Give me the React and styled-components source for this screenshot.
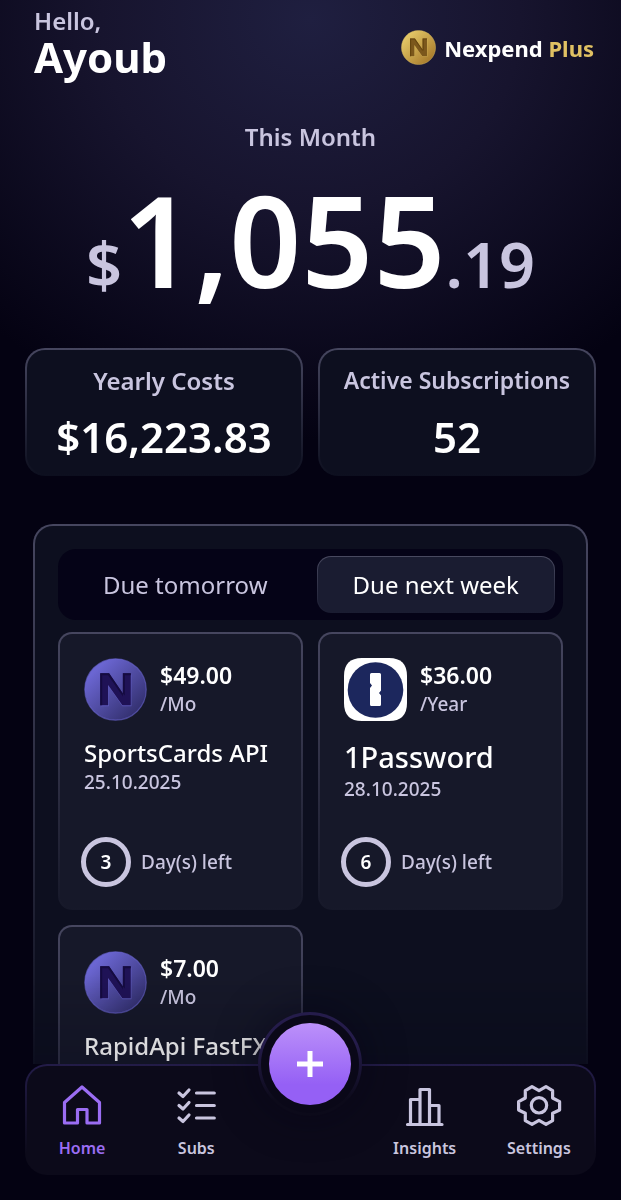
import React, { useState } from 'react'
import styled, { createGlobalStyle, css } from 'styled-components'

const subscriptions = [
  { logo: `nexpend`, price: `$49.00`, period: `/Mo`, name: `SportsCards API`, date: `25.10.2025`, days: 3 },
  { logo: `onepassword`, price: `$36.00`, period: `/Year`, name: `1Password`, date: `28.10.2025`, days: 6, large: true },
  { logo: `nexpend`, price: `$7.00`, period: `/Mo`, name: `RapidApi FastFX` },
]

const Coin = ({ id, size, light, dark, letter, shade }) => {
  return (
    <svg width={size} height={size} viewBox="0 0 64 64" aria-hidden="true">
      <defs>
        <linearGradient id={id} x1="0.1" y1="0.1" x2="0.9" y2="0.9">
          <stop offset="0.1" stopColor={light}/>
          <stop offset="1" stopColor={dark}/>
        </linearGradient>
      </defs>
      <circle cx="32" cy="32" r="31.2" fill={`url(#${id})`} stroke={light} strokeWidth="1.2" strokeOpacity="0.6"/>
      <path d="M17.2 49V16.5h8.5L40 37V16.5h8.2V49H39L25.2 29v20z" fill={light} opacity="0.6"/>
      <path d="M16.5 48V15.5h9L39.5 36V15.5h8V48H39L24.5 27.5V48z" fill={letter}/>
      <path d="M16.5 15.5h9L39.5 36v3L24.5 17.5h-6V48h-2zM39.5 15.5h8v2h-6V38l-2-2z" fill={shade}/>
    </svg>
  )
}

const OnePassword = () => {
  return (
    <svg width="63" height="63" viewBox="0 0 63 63" aria-hidden="true">
      <path d="M18 0h27q18 0 18 18v27q0 18-18 18H18Q0 63 0 45V18Q0 0 18 0z" fill="#fff"/>
      <circle cx="31.5" cy="32" r="27.8" fill="#1c275d"/>
      <path d="M27.5 15h8q1.500 0 1.500 1.500V32.500l-2 2.500 2 2.500v9q0 1.500-1.500 1.500h-8q-1.500 0-1.500-1.500V30l2-2.500-2-2.500v-8.500q0-1.500 1.500-1.500z" fill="#fff"/>
    </svg>
  )
}

const HomeIcon = () => {
  return (
    <NavSvg viewBox="0 0 48 48">
      <path d="M6.5 42V21.5L24 6l17.5 15.5V42H29V28.5h-9.5V42z"/>
    </NavSvg>
  )
}

const SubsIcon = () => {
  return (
    <NavSvg viewBox="0 0 48 48">
      <path d="M7 12l4 3.5 6-6.500M7 24.500l4 3.500 6-6.500M7 37l4 3.500 6-6.500M24.500 12h17.800M24.500 24.500h17.800M24.500 37h17.800"/>
    </NavSvg>
  )
}

const InsightsIcon = () => {
  return (
    <NavSvg viewBox="0 0 48 48">
      <path d="M6.500 43.500H41M9.500 43.500V18.500H19M19 43.500V8.500h9.500v35M28.500 24.500H38v19"/>
    </NavSvg>
  )
}

const SettingsIcon = () => {
  return (
    <NavSvg viewBox="0 0 48 48">
      <path d="M24 9.700l7-4 6.600 4V17l7 3.700V29l-7 3.300v7.400L31 43.300l-7-4-7 4-6.700-3.600v-7.400L3.600 29v-8.300l6.700-3.700V9.700l6.700-4z"/>
      <circle cx="24" cy="24.300" r="7.700"/>
    </NavSvg>
  )
}

const SubscriptionCard = ({ item, id }) => {
  return (
    <Card>
      <CardBody>
        <PriceRow>
          {item.logo === `onepassword`
            ? <OnePassword/>
            : <Coin id={id} size={63} light="#6b66d2" dark="#302d6a" letter="#1f1256" shade="#150b40"/>}
          <div>
            <Price>{item.price}</Price>
            <Period>{item.period}</Period>
          </div>
        </PriceRow>
        <Name large={item.large}>{item.name}</Name>
        {item.date && <DueDate>{item.date}</DueDate>}
      </CardBody>
      {
        item.days &&
        <DaysRow>
          <DaysRing>{item.days}</DaysRing>
          Day(s) left
        </DaysRow>
      }
    </Card>
  )
}

const App = () => {
  const [tab, setTab] = useState(`week`)
  return (
    <Screen>
      <GlobalStyle/>
      <Content>
        <Header>
          <div>
            <Greeting>Hello,</Greeting>
            <UserName>Ayoub</UserName>
          </div>
          <Brand>
            <Coin id="gold" size={35} light="#e2c565" dark="#a5782a" letter="#7b571c" shade="#65450f"/>
            <span>Nexpend <Plus>Plus</Plus></span>
          </Brand>
        </Header>
        <Month>This Month</Month>
        <Amount><Small>$</Small>1,055<Small>.19</Small></Amount>
        <Stats>
          <Stat>
            <StatLabel>Yearly Costs</StatLabel>
            <StatValue>$16,223.83</StatValue>
          </Stat>
          <Stat>
            <StatLabel compact>Active Subscriptions</StatLabel>
            <StatValue>52</StatValue>
          </Stat>
        </Stats>
        <Panel>
          <Tabs>
            <Tab active={tab === `tomorrow`} onClick={() => setTab(`tomorrow`)}>Due tomorrow</Tab>
            <Tab active={tab === `week`} onClick={() => setTab(`week`)}>Due next week</Tab>
          </Tabs>
          <Cards>
            {subscriptions.map((item,index) => {
              return <SubscriptionCard key={index} item={item} id={`coin${index}`}/>
            })}
          </Cards>
        </Panel>
      </Content>
      <Nav>
        <NavItems>
          <NavLink href="#home" active><HomeIcon/>Home</NavLink>
          <NavLink href="#subs"><SubsIcon/>Subs</NavLink>
          <AddSlot>
            <AddRing>
              <AddButton aria-label="Add subscription">
                <svg width="28" height="28" viewBox="0 0 28 28" stroke="#fff" strokeWidth="5"><path d="M14 1v26M1 14h26"/></svg>
              </AddButton>
            </AddRing>
          </AddSlot>
          <NavLink href="#insights"><InsightsIcon/>Insights</NavLink>
          <NavLink href="#settings"><SettingsIcon/>Settings</NavLink>
        </NavItems>
      </Nav>
    </Screen>
  )
}

export default App

const GlobalStyle = createGlobalStyle`
  *{
    box-sizing: border-box;
  }
  body{
    margin: 0;
    background: #040212;
    font-family: "Noto Sans", sans-serif;
    color: white;
  }
  svg{
    display: block;
    flex-shrink: 0;
  }
`
const gradientBorder = css`
  border: 2px solid transparent;
  background: linear-gradient(${p => p.fill}, ${p => p.fill}) padding-box, linear-gradient(#46465f, ${p => p.fill} ${p => p.stop || `100%`}) border-box;
`
const Screen = styled.main`
  display: flex;
  flex-direction: column;
  height: 100vh;
  overflow: hidden;
  background: radial-gradient(ellipse 75% 420px at 50% 20px, #1f1f40 0%, #17142e 45%, #040212 100%);
`
const Content = styled.div`
  flex: 1;
  min-height: 0;
  overflow-y: auto;
  scrollbar-width: none;
  mask-image: linear-gradient(black calc(100% - 90px), #000000d0);
`
const Header = styled.header`
  display: flex;
  justify-content: space-between;
  align-items: center;
  padding: 8px 27px 0 34px;
`
const Greeting = styled.div`
  font-size: 24px;
  line-height: 26px;
  font-weight: 600;
  color: #c9c5df;
`
const UserName = styled.div`
  font-size: 42px;
  line-height: 46px;
  font-weight: 700;
`
const Brand = styled.div`
  display: flex;
  align-items: center;
  gap: 8px;
  margin-top: 7px;
  font-size: 22px;
  line-height: 30px;
  font-weight: 700;
`
const Plus = styled.span`
  color: #e0c163;
`
const Month = styled.h2`
  margin: 42px 0 17px;
  text-align: center;
  font-size: 24px;
  line-height: 30px;
  font-weight: 600;
  color: #c9c5df;
`
const Amount = styled.div`
  display: flex;
  align-items: baseline;
  justify-content: center;
  height: 140px;
  font-size: 126px;
  line-height: 140px;
  font-weight: 600;
`
const Small = styled.span`
  font-size: 63px;
  color: #c9c5df;
`
const Stats = styled.section`
  display: grid;
  grid-template-columns: 1fr 1fr;
  gap: 15px;
  padding: 0 25px;
  margin-top: 39px;
`
const Stat = styled.div.attrs({ fill: `#0d0f1f` })`
  ${gradientBorder}
  display: flex;
  flex-direction: column;
  align-items: center;
  justify-content: space-between;
  height: 128px;
  padding: 16px 0 9px;
  border-radius: 20px;
`
const StatLabel = styled.div.withConfig({ shouldForwardProp: p => p !== `compact` })`
  font-size: ${p => p.compact ? `23px` : `24px`};
  line-height: ${p => p.compact ? `28px` : `30px`};
  font-weight: 600;
  color: #c9c5df;
`
const StatValue = styled.div`
  font-size: 42px;
  line-height: 56px;
  font-weight: 600;
`
const Panel = styled.section.attrs({ fill: `#0d0f1f`, stop: `560px` })`
  ${gradientBorder}
  margin: 48px 33px 0;
  padding: 23px;
  border-radius: 20px;
`
const Tabs = styled.div`
  display: grid;
  grid-template-columns: 1fr 1fr;
  gap: 12px;
  padding: 7px 8px;
  border-radius: 18px;
  background: #050317;
`
const Tab = styled.button.withConfig({ shouldForwardProp: p => p !== `active` }).attrs({ type: `button` })`
  height: 57px;
  padding: 0;
  border: 1px solid transparent;
  border-radius: 14px;
  background: ${p => p.active ? `linear-gradient(#1a1c31, #1a1c31) padding-box, linear-gradient(#494a60, #1a1c31) border-box` : `none`};
  font-family: inherit;
  font-size: 24px;
  line-height: 30px;
  color: ${p => p.active ? `white` : `#c9c5df`};
  cursor: pointer;
`
const Cards = styled.div`
  display: grid;
  grid-template-columns: 1fr 1fr;
  gap: 15px;
  margin-top: 12px;
`
const Card = styled.article.attrs({ fill: `#161829` })`
  ${gradientBorder}
  display: flex;
  flex-direction: column;
  justify-content: space-between;
  height: 278px;
  padding: 24px 21px 21px;
  border-radius: 14px;
  overflow: hidden;
`
const CardBody = styled.div`
  padding: 0 3px;
`
const PriceRow = styled.div`
  display: flex;
  align-items: flex-start;
  gap: 13px;
  height: 64px;
  margin-bottom: 14px;
`
const Price = styled.div`
  font-size: 23px;
  line-height: 34px;
  font-weight: 600;
`
const Period = styled.div`
  font-size: 19px;
  line-height: 24px;
  font-weight: 500;
  color: #c9c5df;
`
const Name = styled.h3.withConfig({ shouldForwardProp: p => p !== `large` })`
  margin: 0;
  font-size: ${p => p.large ? `29px` : `24px`};
  line-height: ${p => p.large ? `41px` : `34px`};
  font-weight: 500;
  white-space: nowrap;
`
const DueDate = styled.div`
  font-size: 19px;
  line-height: 24px;
  font-weight: 500;
  color: #c9c5df;
`
const DaysRow = styled.div`
  display: flex;
  align-items: center;
  gap: 10px;
  font-size: 19px;
  line-height: 26px;
  font-weight: 500;
  color: #c9c5df;
`
const DaysRing = styled.div`
  display: flex;
  align-items: center;
  justify-content: center;
  width: 50px;
  height: 50px;
  border: 5px solid #c9c5df;
  border-radius: 50%;
  font-size: 19px;
  font-weight: 600;
  color: white;
`
const Nav = styled.nav`
  position: relative;
  height: 111px;
  margin: 0 25px 25px;
  border: 2px solid transparent;
  border-radius: 22px;
  background: linear-gradient(#0c0a1a, #0c0a1a) padding-box, linear-gradient(#231c48, #0c0a1a 80%) border-box;
`
const NavItems = styled.div`
  display: grid;
  grid-template-columns: repeat(5, 1fr);
  margin: 0 -2px;
`
const NavLink = styled.a.withConfig({ shouldForwardProp: p => p !== `active` })`
  display: flex;
  flex-direction: column;
  align-items: center;
  gap: 7px;
  padding-top: 15px;
  font-size: 16px;
  line-height: 24px;
  font-weight: 600;
  text-decoration: none;
  color: ${p => p.active ? `#9b6df3` : `#c9c5df`};
`
const NavSvg = styled.svg.attrs({ 'aria-hidden': true })`
  width: 48px;
  height: 48px;
  fill: none;
  stroke: currentColor;
  stroke-width: 3.2;
  stroke-linecap: round;
  stroke-linejoin: round;
`
const AddSlot = styled.div`
  display: flex;
  justify-content: center;
`
const AddRing = styled.div`
  display: flex;
  align-items: center;
  justify-content: center;
  width: 104px;
  height: 104px;
  margin-top: -54px;
  flex-shrink: 0;
  border: 3px solid transparent;
  border-radius: 50%;
  background: linear-gradient(#0a0818, #0a0818) padding-box, linear-gradient(#251c4b 30%, #0c0a1a 85%) border-box;
  box-shadow: 0 0 40px #05031680;
`
const AddButton = styled.button.attrs({ type: `button` })`
  display: flex;
  align-items: center;
  justify-content: center;
  width: 82px;
  height: 82px;
  padding: 0;
  border: 0;
  border-radius: 50%;
  background: linear-gradient(#bc91fa, #9560f5 75%);
  cursor: pointer;
`
